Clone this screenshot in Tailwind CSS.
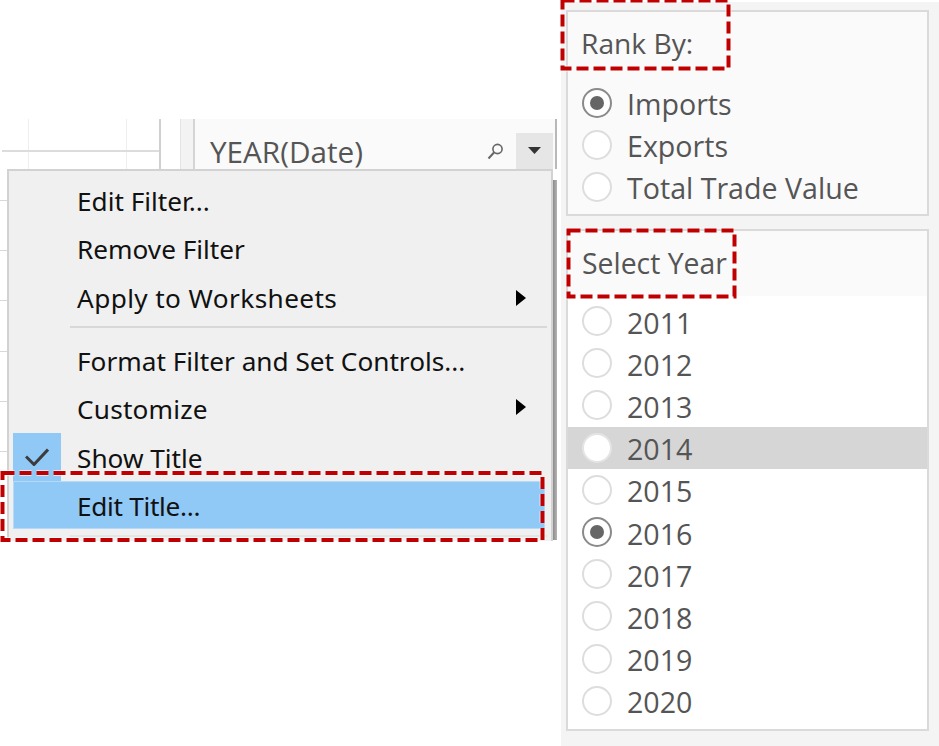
<!DOCTYPE html>
<html lang="en">
<head>
    <meta charset="UTF-8">
    <title>Rank By and Select Year filters</title>
    <script src="https://cdn.jsdelivr.net/npm/@tailwindcss/browser@4"></script>
</head>
<body class="bg-white overflow-hidden">
<div class="relative w-[939px] h-[746px] flex overflow-hidden font-['Open_Sans',sans-serif]">

    <!-- left: sheet + filter header -->
    <div class="w-[561px] h-[746px] pt-[119px] pr-[4px] flex items-start">
        <div class="relative w-[180px] h-[50px] shrink-0">
            <div class="absolute left-[28px] top-0 w-[1px] h-full bg-[#eeeeee]"></div>
            <div class="absolute left-[126px] top-0 w-[1px] h-full bg-[#eeeeee]"></div>
            <div class="absolute left-[2px] top-[31px] w-[158px] h-[2px] bg-[#dcdcdc]"></div>
            <div class="absolute left-[159px] top-0 w-[2px] h-full bg-[#d0d0d0]"></div>
        </div>
        <div class="w-[15px] h-[50px] shrink-0 bg-[#f3f3f3] border-l border-r-2 border-l-[#e4e4e4] border-r-[#d4d4d4]"></div>
        <div class="flex-1 h-[50px] bg-[#fafafa] border-r-2 border-[#b8b8b8] flex pl-[15px] pr-[2px]">
            <span class="text-[29.700px] leading-[66px] text-[#555555]">YEAR(Date)</span>
            <svg class="ml-auto mt-[24px] w-[17px] h-[17px]" viewBox="0 0 17 17" fill="none" stroke="#666666">
                <circle cx="10.500" cy="6" r="4.600" stroke-width="1.600"/>
                <path d="M7 9.500 1.500 15.500" stroke-width="2"/>
            </svg>
            <div class="ml-[12px] mt-[14px] w-[37px] h-[36px] bg-[#e6e6e6] flex items-center justify-center">
                <svg class="w-[13px] h-[7px] mb-[2px]" viewBox="0 0 13 7"><path d="M0 0h13L6.500 7z" fill="#333333"/></svg>
            </div>
        </div>
    </div>

    <!-- right: filter panel -->
    <div class="w-[378px] h-[744px] mt-[2px] bg-[#f4f4f4] pl-[5px] pr-[10px] pt-[8px] flex flex-col gap-[13px] text-[28.600px] text-[#555555]">
        <section class="h-[206px] bg-[#fafafa] border-2 border-[#dadada] pl-[14px]">
            <h2 class="h-[70px] pt-[9px] -ml-[1px] leading-[44px] text-[28.200px] font-normal">Rank By:</h2>
            <div class="flex flex-col">
                <label class="h-[42px] flex items-center gap-[15px]">
                    <span class="w-[30px] h-[30px] rounded-full bg-white border-2 border-[#8a8a8a] flex items-center justify-center"><span class="w-[14px] h-[14px] rounded-full bg-[#666666]"></span></span><span class="pt-[2px]">Imports</span>
                </label>
                <label class="h-[42px] flex items-center gap-[15px]">
                    <span class="w-[30px] h-[30px] rounded-full bg-white border-2 border-[#dddddd]"></span><span class="pt-[2px]">Exports</span>
                </label>
                <label class="h-[42px] flex items-center gap-[15px]">
                    <span class="w-[30px] h-[30px] rounded-full bg-white border-2 border-[#dddddd]"></span><span class="pt-[2px]">Total Trade Value</span>
                </label>
            </div>
        </section>
        <section class="h-[502px] bg-white border-2 border-[#dadada]">
            <h2 class="h-[65px] bg-[#fafafa] pl-[14px] pt-[10px] leading-[44px] text-[28.400px] font-normal">Select Year</h2>
            <div class="flex flex-col pt-[4px]">
                <label class="h-[42.200px] pl-[14px] flex items-center gap-[15px]"><span class="w-[30px] h-[30px] rounded-full bg-white border-2 border-[#dddddd]"></span><span class="pt-[4px]">2011</span></label>
                <label class="h-[42.200px] pl-[14px] flex items-center gap-[15px]"><span class="w-[30px] h-[30px] rounded-full bg-white border-2 border-[#dddddd]"></span><span class="pt-[4px]">2012</span></label>
                <label class="h-[42.200px] pl-[14px] flex items-center gap-[15px]"><span class="w-[30px] h-[30px] rounded-full bg-white border-2 border-[#dddddd]"></span><span class="pt-[4px]">2013</span></label>
                <label class="h-[42.200px] pl-[14px] flex items-center gap-[15px] bg-[#d6d6d6]"><span class="w-[30px] h-[30px] rounded-full bg-white border-2 border-[#e4e4e4]"></span><span class="pt-[4px]">2014</span></label>
                <label class="h-[42.200px] pl-[14px] flex items-center gap-[15px]"><span class="w-[30px] h-[30px] rounded-full bg-white border-2 border-[#dddddd]"></span><span class="pt-[4px]">2015</span></label>
                <label class="h-[42.200px] pl-[14px] flex items-center gap-[15px]"><span class="w-[30px] h-[30px] rounded-full bg-white border-2 border-[#8a8a8a] flex items-center justify-center"><span class="w-[14px] h-[14px] rounded-full bg-[#666666]"></span></span><span class="pt-[4px]">2016</span></label>
                <label class="h-[42.200px] pl-[14px] flex items-center gap-[15px]"><span class="w-[30px] h-[30px] rounded-full bg-white border-2 border-[#dddddd]"></span><span class="pt-[4px]">2017</span></label>
                <label class="h-[42.200px] pl-[14px] flex items-center gap-[15px]"><span class="w-[30px] h-[30px] rounded-full bg-white border-2 border-[#dddddd]"></span><span class="pt-[4px]">2018</span></label>
                <label class="h-[42.200px] pl-[14px] flex items-center gap-[15px]"><span class="w-[30px] h-[30px] rounded-full bg-white border-2 border-[#dddddd]"></span><span class="pt-[4px]">2019</span></label>
                <label class="h-[42.200px] pl-[14px] flex items-center gap-[15px]"><span class="w-[30px] h-[30px] rounded-full bg-white border-2 border-[#dddddd]"></span><span class="pt-[4px]">2020</span></label>
            </div>
        </section>
    </div>

    <!-- ticks of the sheet behind the menu -->
    <div class="absolute left-0 top-[200px] w-[7px] h-[252px] flex flex-col justify-between">
        <div class="h-[1px] bg-[#d8d8d8]"></div>
        <div class="h-[1px] bg-[#d8d8d8]"></div>
        <div class="h-[1px] bg-[#d8d8d8]"></div>
        <div class="h-[1px] bg-[#d8d8d8]"></div>
        <div class="h-[1px] bg-[#d8d8d8]"></div>
        <div class="h-[1px] bg-[#d8d8d8]"></div>
    </div>

    <!-- context menu -->
    <div class="absolute left-[7px] top-[169px] w-[546px] h-[372px] bg-[#f0f0f0] border-t-2 border-l-2 border-r-2 border-[#d2d2d2] pl-[4px] pr-[6px] pt-[6px] text-[26.200px] text-[#111111] font-['Noto_Sans',sans-serif]">
        <div class="h-[48.500px] flex items-center pl-[64px]">Edit Filter...</div>
        <div class="h-[48.500px] flex items-center pl-[64px]">Remove Filter</div>
        <div class="h-[48.500px] flex items-center pl-[64px]"><span class="tracking-[0.4px]">Apply to Worksheets</span>
            <svg class="ml-auto mr-[19px] w-[10px] h-[16px]" viewBox="0 0 10 16"><path d="M0 0l10 8-10 8z" fill="#000000"/></svg>
        </div>
        <div class="h-[13px] pt-[3px] pl-[57px] mr-[-2px]"><div class="h-[2px] bg-[#d8d8d8]"></div></div>
        <div class="h-[48.500px] flex items-center pl-[64px]"><span class="pt-[3px]">Format Filter and Set Controls...</span></div>
        <div class="h-[48.500px] flex items-center pl-[64px]"><span class="pt-[3px] tracking-[0.2px]">Customize</span>
            <svg class="ml-auto mr-[19px] mb-[2px] w-[10px] h-[16px]" viewBox="0 0 10 16"><path d="M0 0l10 8-10 8z" fill="#000000"/></svg>
        </div>
        <div class="h-[48.500px] flex items-center">
            <div class="w-[48px] h-[48.500px] bg-[#90c8f6] flex items-center justify-center shrink-0">
                <svg class="w-[24px] h-[18px]" viewBox="0 0 24 18" fill="none"><path d="M1 8.500l8 8L23 1.500" stroke="#3c3c3c" stroke-width="3"/></svg>
            </div>
            <span class="pl-[16px] pt-[3px]">Show Title</span>
        </div>
        <div class="h-[48px] bg-[#90c8f6] border border-[#b5d9f8] flex items-center pl-[63px]"><span class="pt-[3px] tracking-[-0.300px]">Edit Title...</span></div>
        <div class="mt-[6px] ml-[57px] mr-[-2px] h-[2px] bg-[#e4e4e4]"></div>
    </div>
    <!-- menu drop shadow -->
    <div class="absolute left-[553px] top-[180px] w-[4px] h-[360px] bg-gradient-to-r from-[#8c8c8c] to-[#b4b4b4]"></div>

    <!-- red dashed callouts -->
    <svg class="absolute left-0 top-0 w-[939px] h-[746px] pointer-events-none" viewBox="0 0 939 746" fill="none" stroke-dasharray="12 5">
        <g stroke="#ffffff" stroke-opacity="0.6" stroke-width="6">
            <rect x="562.500" y="0.500" width="166" height="68"/>
            <rect x="568.500" y="230.500" width="166" height="66"/>
            <rect x="2.500" y="473" width="540" height="67"/>
        </g>
        <g stroke="#c00000" stroke-width="4">
            <rect x="562.500" y="0.500" width="166" height="68"/>
            <rect x="568.500" y="230.500" width="166" height="66"/>
            <rect x="2.500" y="473" width="540" height="67"/>
        </g>
    </svg>
</div>
</body>
</html>
